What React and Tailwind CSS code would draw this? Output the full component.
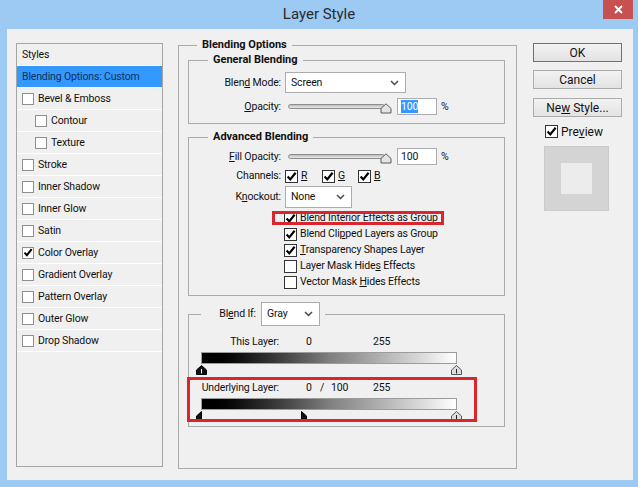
import React from "react";

function Check({ checked, light }) {
  return (
    <span
      className={
        light
          ? "w-[12px] h-[12px] border border-[#8e8f8f] bg-white flex items-center justify-center shrink-0"
          : "w-[13px] h-[13px] border border-[#333333] bg-white flex items-center justify-center shrink-0"
      }
    >
      {checked && (
        <svg width="11" height="11" viewBox="0 0 11 11">
          <path d="M1.6 5.6 L4.3 8.4 L9.6 1.8" fill="none" stroke="#000" strokeWidth="2.2" />
        </svg>
      )}
    </span>
  );
}

function Chevron() {
  return (
    <svg width="9" height="6" viewBox="0 0 9 6">
      <path d="M1 1 L4.5 4.5 L8 1" fill="none" stroke="#4a4a4a" strokeWidth="1.5" />
    </svg>
  );
}

function Select({ value, cls }) {
  return (
    <div className={"border border-[#acacac] bg-white flex items-center justify-between pl-[5px] pr-[6px] " + cls}>
      <span>{value}</span>
      <Chevron />
    </div>
  );
}

function Slider() {
  return (
    <div className="flex items-center ml-[3px]">
      <div className="w-[97px] h-[5px] rounded-full border border-[#8d8d8d] bg-gradient-to-b from-[#bdbdbd] to-[#e9e9e9]" />
      <svg className="-ml-[5px] mt-[3px]" width="12" height="11" viewBox="0 0 12 11">
        <path d="M1 10 V5.5 L6 0.8 L11 5.5 V10 Z" fill="#e4e4e4" stroke="#5a5a5a" strokeWidth="1" strokeLinejoin="round" />
      </svg>
    </div>
  );
}

function Thumb({ kind, left }) {
  if (kind === "black") {
    return (
      <svg className="absolute top-0" style={{ left }} width="11" height="10" viewBox="0 0 11 10">
        <path d="M0.5 9.5 V5 L5.5 0.5 L10.5 5 V9.5 Z" fill="#111" stroke="#000" />
        <path d="M5.5 4 V8.5" stroke="#fff" strokeWidth="1" />
      </svg>
    );
  }
  if (kind === "white") {
    return (
      <svg className="absolute top-0" style={{ left }} width="11" height="10" viewBox="0 0 11 10">
        <path d="M0.5 9.5 V5 L5.5 0.5 L10.5 5 V9.5 Z" fill="#dcdcdc" stroke="#555" />
        <path d="M5.5 4 V8.5" stroke="#222" strokeWidth="1" />
      </svg>
    );
  }
  if (kind === "leftHalf") {
    return (
      <svg className="absolute top-0" style={{ left }} width="6" height="10" viewBox="0 0 6 10">
        <path d="M5.5 0.5 V9.5 H0.5 V5 Z" fill="#111" stroke="#000" />
      </svg>
    );
  }
  return (
    <svg className="absolute top-0" style={{ left }} width="6" height="10" viewBox="0 0 6 10">
      <path d="M0.5 0.5 V9.5 H5.5 V5 Z" fill="#111" stroke="#000" />
    </svg>
  );
}

const styleRows = [
  { t: "Bevel & Emboss" },
  { t: "Contour", indent: true },
  { t: "Texture", indent: true },
  { t: "Stroke" },
  { t: "Inner Shadow" },
  { t: "Inner Glow" },
  { t: "Satin" },
  { t: "Color Overlay", checked: true },
  { t: "Gradient Overlay" },
  { t: "Pattern Overlay" },
  { t: "Outer Glow" },
  { t: "Drop Shadow" },
];

function Btn({ children, primary, cls = "" }) {
  return (
    <div
      className={
        (primary ? "border-[#3c7fb1] " : "border-[#acacac] ") +
        "h-[19px] w-[89px] border bg-gradient-to-b from-[#f2f2f2] to-[#e3e3e3] flex items-center justify-center text-[12px] tracking-normal text-[#111] " +
        cls
      }
    >
      {children}
    </div>
  );
}

export default function App() {
  return (
    <div className="w-[638px] h-[487px] bg-[#9ccaf3] flex flex-col overflow-hidden [font-family:Roboto,'Liberation_Sans',Arial,sans-serif] text-[#111] text-[10.5px] tracking-[-0.15px] leading-[16px]">
      {/* title bar */}
      <div className="h-[29px] flex items-start justify-between shrink-0">
        <div className="w-[35px]" />
        <div className="text-[15px] tracking-normal leading-[18px] text-[#2b2b2b] pt-[5px]">Layer Style</div>
        <div className="w-[35px]">
          <div className="w-[30px] h-[19px] bg-[#c75050] flex items-center justify-center">
            <svg width="9" height="9" viewBox="0 0 9 9">
              <path d="M1 1 L8 8 M8 1 L1 8" stroke="#fff" strokeWidth="1.8" />
            </svg>
          </div>
        </div>
      </div>

      {/* content */}
      <div className="ml-[7px] mr-[5px] h-[451px] bg-[#f0f0f0] flex items-start pt-[8px] pl-[9px] relative shrink-0">
        {/* styles list */}
        <div className="mt-[6px] w-[147px] h-[424px] border border-[#a5a5a5] flex flex-col shrink-0">
          <div className="h-[22px] border-b border-white flex items-center pl-[5px]">Styles</div>
          <div className="h-[22px] border-b border-white flex items-center pl-[5px] bg-[#3399ff] text-[#0f2f5c]">
            Blending Options: Custom
          </div>
          {styleRows.map((r) => (
            <div
              key={r.t}
              className={
                r.indent
                  ? "h-[22px] border-b border-white flex items-center pl-[18px] gap-[4px]"
                  : "h-[22px] border-b border-white flex items-center pl-[5px] gap-[4px]"
              }
            >
              <Check light checked={r.checked} />
              <span>{r.t}</span>
            </div>
          ))}
        </div>

        {/* blending options */}
        <fieldset className="ml-[15px] w-[339px] h-[432px] border border-[#aaaaaa] shrink-0">
          <legend className="ml-[18px] px-[5px] font-bold text-[11px] tracking-normal">Blending Options</legend>

          <fieldset className="ml-[9px] w-[317px] h-[72px] border border-[#aaaaaa] -mt-[1px]">
            <legend className="ml-[19px] px-[5px] font-bold text-[11px] tracking-normal">General Blending</legend>
            <div className="flex items-center h-[21px] mt-[4px]">
              <span className="w-[96px] pr-[4px] text-right">
                Blen<u>d</u> Mode:
              </span>
              <Select value="Screen" cls="w-[121px] h-[21px]" />
            </div>
            <div className="flex items-center h-[17px] mt-[5px]">
              <span className="w-[96px] pr-[4px] text-right">
                <u>O</u>pacity:
              </span>
              <Slider />
              <div className="ml-[5px] w-[40px] h-[17px] border border-[#abadb3] bg-white flex items-center pl-[3px]">
                <span className="bg-[#3399ff] text-white leading-[13px]">100</span>
              </div>
              <span className="ml-[4px]">%</span>
            </div>
          </fieldset>

          <fieldset className="ml-[9px] w-[317px] h-[167px] border border-[#aaaaaa] mt-[5px]">
            <legend className="ml-[19px] px-[5px] font-bold text-[11px] tracking-normal">Advanced Blending</legend>
            <div className="flex items-center h-[17px] mt-[3px]">
              <span className="w-[96px] pr-[4px] text-right">
                <u>F</u>ill Opacity:
              </span>
              <Slider />
              <div className="ml-[5px] w-[40px] h-[17px] border border-[#abadb3] bg-white flex items-center pl-[3px]">
                <span>100</span>
              </div>
              <span className="ml-[4px]">%</span>
            </div>
            <div className="flex items-center h-[18px] mt-[2px]">
              <span className="w-[96px] pr-[4px] text-right">Channels:</span>
              <div className="w-[37px] flex items-center gap-[3px]">
                <Check checked />
                <u>R</u>
              </div>
              <div className="w-[36px] flex items-center gap-[3px]">
                <Check checked />
                <u>G</u>
              </div>
              <div className="flex items-center gap-[3px]">
                <Check checked />
                <u>B</u>
              </div>
            </div>
            <div className="flex items-center h-[22px] mt-[1px]">
              <span className="w-[96px] pr-[4px] text-right">
                K<u>n</u>ockout:
              </span>
              <Select value="None" cls="w-[67px] h-[22px]" />
            </div>
            <div className="mt-[2px] flex flex-col">
              {[
                { c: true, el: <>Blend <u>I</u>nterior Effects as Group</> },
                { c: true, el: <>Blend Cli<u>p</u>ped Layers as Group</> },
                { c: true, el: <><u>T</u>ransparency Shapes Layer</> },
                { c: false, el: <>Layer Mask Hide<u>s</u> Effects</> },
                { c: false, el: <>Vector Mask <u>H</u>ides Effects</> },
              ].map((r, i) => (
                <div key={i} className="h-[16px] flex items-center pl-[95px] gap-[3px]">
                  <Check checked={r.c} />
                  <span>{r.el}</span>
                </div>
              ))}
            </div>
          </fieldset>

          <fieldset className="ml-[9px] w-[317px] h-[125px] border border-[#aaaaaa] mt-[6px]">
            <legend className="ml-[12px] pr-[5px]">
              <span className="inline-flex items-center align-middle">
                <span className="w-[60px] pr-[5px] text-right">
                  Bl<u>e</u>nd If:
                </span>
                <Select value="Gray" cls="w-[59px] h-[24px]" />
              </span>
            </legend>
            <div className="flex items-center h-[16px] mt-[8px]">
              <span className="w-[90px] text-right">This Layer:</span>
              <span className="ml-[27px] w-[67px]">0</span>
              <span>255</span>
            </div>
            <div className="ml-[12px] mt-[2px] w-[256px] h-[12px] border border-[#9c9c9c] bg-gradient-to-r from-black via-[#7f7f7f] to-white" />
            <div className="relative ml-[7px] mt-[1px] w-[266px] h-[10px]">
              <Thumb kind="black" left={0} />
              <Thumb kind="white" left={255} />
            </div>
            <div className="flex items-center h-[16px] mt-[5px]">
              <span className="w-[90px] text-right">Underlying Layer:</span>
              <span className="ml-[27px] w-[14px]">0</span>
              <span className="w-[11px]">/</span>
              <span className="w-[42px]">100</span>
              <span>255</span>
            </div>
            <div className="ml-[12px] mt-[2px] w-[256px] h-[12px] border border-[#9c9c9c] bg-gradient-to-r from-black via-[#7f7f7f] to-white" />
            <div className="relative ml-[7px] mt-[1px] w-[266px] h-[10px]">
              <Thumb kind="leftHalf" left={0} />
              <Thumb kind="rightHalf" left={105} />
              <Thumb kind="white" left={255} />
            </div>
          </fieldset>
        </fieldset>

        {/* right column */}
        <div className="ml-[16px] mt-[6px] w-[89px] flex flex-col shrink-0">
          <Btn primary>OK</Btn>
          <Btn cls="mt-[8px]">Cancel</Btn>
          <Btn cls="mt-[9px]">
            Ne<u>w</u>&nbsp;Style...
          </Btn>
          <div className="mt-[8px] ml-[12px] flex items-center gap-[3px] text-[12px] tracking-normal h-[13px]">
            <Check checked />
            <span>
              Pre<u>v</u>iew
            </span>
          </div>
          <div className="mt-[8px] ml-[11px] w-[65px] h-[65px] bg-[#d4d4d4] border border-[#cacaca] flex items-center justify-center">
            <div className="w-[31px] h-[31px] bg-[#ececec]" />
          </div>
        </div>

        {/* annotation boxes */}
        <div className="absolute left-[265px] top-[182px] w-[172px] h-[14px] border-[3px] border-[#d9262c]" />
        <div className="absolute left-[180px] top-[348px] w-[290px] h-[45px] border-[3px] border-[#d9262c]" />
      </div>
    </div>
  );
}
